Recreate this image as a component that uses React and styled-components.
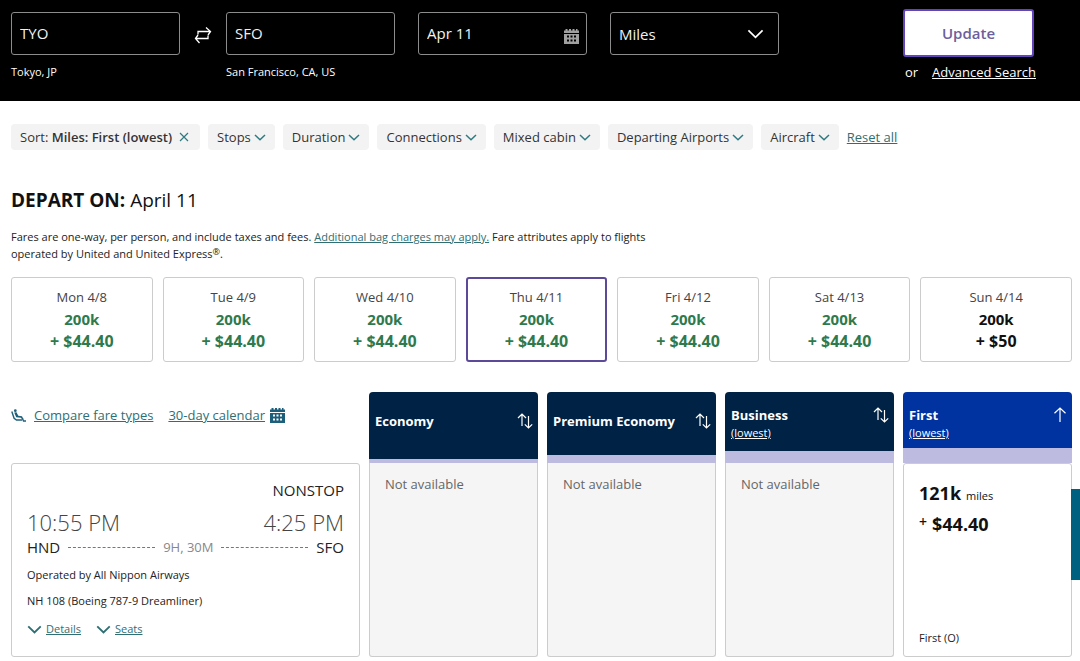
import React from "react";
import styled, { createGlobalStyle } from "styled-components";

const GlobalStyle = createGlobalStyle`
  * {
    box-sizing: border-box;
  }
  body {
    margin: 0;
    background-color: #ffffff;
    color: #222222;
    font-family: "Open Sans", "Noto Sans", sans-serif;
    font-size: 14px;
  }
  button, input, select {
    font-family: inherit;
  }
  a {
    color: #2f6f73;
  }
  svg {
    display: block;
    flex: none;
  }
`;

const SearchBar = styled.form`
  display: flex;
  align-items: flex-start;
  padding: 12px 44px 22px 11px;
  background-color: #000000;
  color: #ffffff;
`;

const Field = styled.div`
  flex: 0 1 169px;
  min-width: 0;
  margin-right: ${(props) => (props.$last ? "0" : "23px")};
`;

const Route = styled.div`
  display: flex;
  flex: 0 1 384px;
  min-width: 0;
  margin-right: 23px;
`;

const RouteField = styled(Field)`
  flex: 1 1 0;
  margin-right: 0;
`;

const Box = styled.div`
  position: relative;
  svg {
    position: absolute;
    right: ${(props) => props.$right || "8px"};
    top: ${(props) => props.$top || "17px"};
    pointer-events: none;
  }
`;

const controlStyle = `
  display: block;
  width: 100%;
  height: 43px;
  padding: 0 8px 2px;
  border: 1px solid #8c8c8c;
  border-radius: 3px;
  background-color: #000000;
  color: #f2f2f2;
  font-size: 15px;
`;

const TextBox = styled.input`
  ${controlStyle}
`;

const DropDown = styled.select`
  ${controlStyle}
  padding-bottom: 0;
  appearance: none;
`;

const Hint = styled.label`
  display: block;
  height: 14px;
  margin-top: 10px;
  font-size: 11px;
  line-height: 14px;
  white-space: nowrap;
`;

const SwapButton = styled.button`
  display: flex;
  align-items: center;
  justify-content: center;
  flex: 0 0 46px;
  height: 46px;
  padding: 0;
  border: 0;
  background: none;
  color: #ffffff;
`;

const Actions = styled.div`
  width: 133px;
  margin: -3px 0 -8px auto;
`;

const UpdateButton = styled.button`
  width: 131px;
  height: 48px;
  border: 2px solid #6244bb;
  border-radius: 3px;
  background-color: #ffffff;
  color: #6c5f9c;
  font-size: 15px;
  font-weight: 600;
`;

const Advanced = styled.div`
  display: flex;
  justify-content: space-between;
  margin-top: 6px;
  padding-left: 2px;
  font-size: 13px;
  line-height: 18px;
  white-space: nowrap;
  a {
    color: #ffffff;
  }
`;

const Content = styled.main`
  padding: 0 8px 0 11px;
`;

const Filters = styled.div`
  display: flex;
  align-items: center;
  gap: 8px;
  margin-top: 23px;
`;

const FilterButton = styled.button`
  display: flex;
  align-items: center;
  gap: ${(props) => (props.$applied ? "7px" : "3px")};
  height: 26px;
  padding: ${(props) => (props.$applied ? "0 11px 0 9px" : "0 9px")};
  border: 0;
  border-radius: 4px;
  background-color: #f3f3f3;
  color: #333333;
  font-size: 13px;
  white-space: nowrap;
  b {
    font-weight: 600;
  }
  svg {
    color: #2f7a80;
  }
`;

const TextLink = styled.a`
  font-size: ${(props) => props.$size || "13px"};
  white-space: nowrap;
`;

const Heading = styled.h1`
  margin: 37px 0 0;
  color: #111111;
  font-size: 19px;
  font-weight: 500;
  line-height: 26px;
  strong {
    font-weight: 700;
  }
`;

const Notice = styled.p`
  max-width: 660px;
  margin: 15px 0 0;
  font-size: 11px;
  line-height: 17px;
  sup {
    font-size: 9px;
    line-height: 0;
    vertical-align: 3px;
  }
`;

const Days = styled.div`
  display: grid;
  grid-template-columns: repeat(6, 14fr) 15fr;
  gap: 10px;
  margin-top: 15px;
`;

const DayButton = styled.button`
  display: flex;
  flex-direction: column;
  align-items: center;
  height: 85px;
  padding: ${(props) => (props.$selected ? "7px" : "8px")} 0 0;
  border: ${(props) => (props.$selected ? "2px solid #5c4a99" : "1px solid #cccccc")};
  border-radius: 3px;
  background-color: #ffffff;
  color: ${(props) => (props.$low ? "#2f7a4d" : "#111111")};
  font-size: 15px;
  font-weight: 700;
  line-height: 22px;
`;

const DayName = styled.span`
  color: #444444;
  font-size: 13px;
  font-weight: 400;
`;

const Fee = styled.span`
  font-size: 16px;
`;

const Results = styled.section`
  display: grid;
  grid-template-columns: minmax(0, 349fr) repeat(4, minmax(0, 169fr));
  column-gap: 9px;
  margin-top: 30px;
  padding-bottom: 4px;
`;

const Tools = styled.div`
  display: flex;
  align-items: center;
  gap: 8px;
  height: 46px;
`;

const CalendarLink = styled.span`
  display: flex;
  align-items: center;
  gap: 5px;
  margin-left: 7px;
`;

const CabinHeader = styled.div`
  display: flex;
  align-items: flex-start;
  justify-content: space-between;
  height: 71px;
  padding: ${(props) => (props.$lowest ? "14px" : "20px")} 5px 0 6px;
  border-bottom: ${(props) => props.$band} solid #bdbbe0;
  border-radius: 4px 4px 0 0;
  background-color: ${(props) => (props.$active ? "#0033a0" : "#002244")};
  color: #ffffff;
`;

const CabinTitle = styled.div`
  font-size: 13px;
  font-weight: 700;
  line-height: 18px;
  white-space: nowrap;
  a {
    display: block;
    color: #ffffff;
    font-size: 11px;
    font-weight: 400;
  }
`;

const SortButton = styled.button`
  padding: 1px 0;
  border: 0;
  background: none;
  color: #ffffff;
`;

const Card = styled.div`
  display: flex;
  flex-direction: column;
  height: 194px;
  padding: 16px 15px;
  border: 1px solid #cccccc;
  border-radius: 3px;
  background-color: #ffffff;
`;

const EmptyCard = styled(Card)`
  padding: 11px 15px;
  border-top: 0;
  border-radius: 0 0 3px 3px;
  background-color: #f5f5f5;
  color: #666666;
  font-size: 13px;
  line-height: 20px;
`;

const Stops = styled.div`
  align-self: flex-end;
  font-size: 15px;
  line-height: 20px;
`;

const Times = styled.div`
  display: flex;
  justify-content: space-between;
  margin-top: 7px;
  color: #444444;
  font-size: 22px;
  font-weight: 300;
  line-height: 30px;
`;

const Leg = styled.div`
  display: flex;
  align-items: center;
  gap: 8px;
  font-size: 15px;
  line-height: 20px;
`;

const Dashes = styled.span`
  flex: 1;
  border-top: 1px dashed #777777;
`;

const Duration = styled.span`
  color: #888888;
  font-size: 13px;
`;

const FlightInfo = styled.div`
  margin-top: 10px;
  font-size: 11px;
  line-height: 16px;
`;

const FlightLinks = styled.div`
  display: flex;
  gap: 15px;
  margin-top: 12px;
  line-height: 16px;
  span {
    display: flex;
    align-items: center;
    gap: 4px;
  }
  svg {
    color: #2f6f73;
  }
`;

const Price = styled.div`
  display: flex;
  align-items: baseline;
  gap: 5px;
  margin-bottom: 5px;
  color: #111111;
  font-size: 18px;
  font-weight: 700;
  line-height: 26px;
  small {
    font-size: 11px;
    font-weight: 400;
    line-height: 16px;
  }
`;

const Plus = styled.span`
  align-self: flex-start;
  font-size: 14px;
  font-weight: 600;
  line-height: 22px;
`;

const FareClass = styled.div`
  margin-top: auto;
  margin-bottom: -6px;
  font-size: 11px;
  line-height: 16px;
`;

const SideTab = styled.div`
  position: fixed;
  top: 489px;
  right: 0;
  width: 9px;
  height: 91px;
  background-color: #006080;
`;

const Chevron = ({ width = 12, height = 7, stroke = 1.5 }) => (
  <svg width={width} height={height} viewBox="0 0 12 7" fill="none">
    <path d="M1 1l5 4.8L11 1" stroke="currentColor" strokeWidth={stroke} />
  </svg>
);

const SwapIcon = () => (
  <svg width="18" height="18" viewBox="0 0 18 18" fill="none">
    <path
      d="M4 8.5V5.5H16.5M12 1.5l4.5 4-2.5 3.5M14 9.500v3H1.500M5.500 17l-4-4.500 2.500-3.500"
      stroke="currentColor"
      strokeWidth="1.3"
    />
  </svg>
);

const CalendarIcon = ({ color, hole }) => (
  <svg width="15" height="15" viewBox="0 0 15 15">
    <path d="M0 1.500h1.500V0h2v1.500H5V0h2v1.500h1.500V0h2v1.500H12V0h1.500v1.500H15V4H0zM0 5h15v10H0z" fill={color} />
    <path
      d="M3 6.500h2v2H3zM6.500 6.500h2v2h-2zM10 6.500h2v2h-2zM3 10.500h2v2H3zM6.500 10.500h2v2h-2zM10 10.500h2v2h-2z"
      fill={hole}
    />
  </svg>
);

const SeatIcon = () => (
  <svg width="15" height="13" viewBox="0 0 15 13">
    <circle cx="4.300" cy="1.700" r="1.400" fill="#1f6079" />
    <path d="M3.200 3.400l2.300-.2 1.800 3.600 3.700.5 1.400 2.700-1.200.4-1.300-1.700-4.700-.4z" fill="#1f6079" />
    <path
      d="M.8 2.500l2.300 6.700 2.400 1.800h5.500M11.500 9.500l1 2.500H15"
      fill="none"
      stroke="#1f6079"
      strokeWidth="1.400"
    />
  </svg>
);

const SortIcon = () => (
  <svg width="16" height="16" viewBox="0 0 16 16" fill="none" stroke="currentColor" strokeWidth="1.2">
    <path d="M5 13V1M1 5l4-4 4 4M11.500 3v12M7.800 11.300l3.700 3.700 3.700-3.700" />
  </svg>
);

const UpIcon = () => (
  <svg width="14" height="16" viewBox="0 0 14 16" fill="none" stroke="currentColor" strokeWidth="1.2">
    <path d="M7 15V1M1.500 6.200L7 1l5.500 5.200" />
  </svg>
);

const CloseIcon = () => (
  <svg width="10" height="10" viewBox="0 0 10 10" fill="none">
    <path d="M1 1l8 8M9 1L1 9" stroke="currentColor" strokeWidth="1.2" />
  </svg>
);

const filters = ["Stops", "Duration", "Connections", "Mixed cabin", "Departing Airports", "Aircraft"];

const days = [
  { name: "Mon 4/8", fee: "$44.40", low: true },
  { name: "Tue 4/9", fee: "$44.40", low: true },
  { name: "Wed 4/10", fee: "$44.40", low: true },
  { name: "Thu 4/11", fee: "$44.40", low: true, selected: true },
  { name: "Fri 4/12", fee: "$44.40", low: true },
  { name: "Sat 4/13", fee: "$44.40", low: true },
  { name: "Sun 4/14", fee: "$50" },
];

const cabins = [
  { name: "Economy", band: "4px" },
  { name: "Premium Economy", band: "8px" },
  { name: "Business", band: "12px", lowest: true },
  { name: "First", band: "15px", lowest: true, active: true },
];

const App = () => {
  return (
    <>
      <GlobalStyle />
      <SearchBar onSubmit={(e) => e.preventDefault()}>
        <Route>
          <RouteField>
            <TextBox id="from" defaultValue="TYO" />
            <Hint htmlFor="from">Tokyo, JP</Hint>
          </RouteField>
          <SwapButton type="button" aria-label="Swap airports">
            <SwapIcon />
          </SwapButton>
          <RouteField>
            <TextBox id="to" defaultValue="SFO" />
            <Hint htmlFor="to">San Francisco, CA, US</Hint>
          </RouteField>
        </Route>
        <Field>
          <Box>
            <TextBox aria-label="Depart date" defaultValue="Apr 11" />
            <CalendarIcon color="#a0a0a0" hole="#000000" />
          </Box>
        </Field>
        <Field $last>
          <Box $right="15px">
            <DropDown aria-label="Show price in" defaultValue="Miles">
              <option>Miles</option>
              <option>Money</option>
            </DropDown>
            <Chevron width={17} height={10} stroke={1.2} />
          </Box>
        </Field>
        <Actions>
          <UpdateButton type="submit">Update</UpdateButton>
          <Advanced>
            or <a href="#advanced">Advanced Search</a>
          </Advanced>
        </Actions>
      </SearchBar>
      <Content>
        <Filters>
          <FilterButton $applied>
            <span>
              Sort: <b>Miles: First (lowest)</b>
            </span>
            <CloseIcon />
          </FilterButton>
          {filters.map((name) => (
            <FilterButton key={name}>
              {name}
              <Chevron />
            </FilterButton>
          ))}
          <TextLink href="#reset">Reset all</TextLink>
        </Filters>
        <Heading>
          <strong>DEPART ON:</strong> April 11
        </Heading>
        <Notice>
          Fares are one-way, per person, and include taxes and fees.{" "}
          <a href="#bags">Additional bag charges may apply.</a> Fare attributes apply to flights
          operated by United and United Express<sup>®</sup>.
        </Notice>
        <Days>
          {days.map((day) => (
            <DayButton key={day.name} $low={day.low} $selected={day.selected}>
              <DayName>{day.name}</DayName>
              <span>200k</span>
              <Fee>+ {day.fee}</Fee>
            </DayButton>
          ))}
        </Days>
        <Results>
          <Tools>
            <SeatIcon />
            <TextLink href="#compare">Compare fare types</TextLink>
            <CalendarLink>
              <TextLink href="#calendar">30-day calendar</TextLink>
              <CalendarIcon color="#1b5f7a" hole="#ffffff" />
            </CalendarLink>
          </Tools>
          {cabins.map((cabin) => (
            <CabinHeader
              key={cabin.name}
              $band={cabin.band}
              $lowest={cabin.lowest}
              $active={cabin.active}
            >
              <CabinTitle>
                {cabin.name}
                {cabin.lowest && <a href="#lowest">(lowest)</a>}
              </CabinTitle>
              <SortButton aria-label={"Sort by " + cabin.name}>
                {cabin.active ? <UpIcon /> : <SortIcon />}
              </SortButton>
            </CabinHeader>
          ))}
          <Card>
            <Stops>NONSTOP</Stops>
            <Times>
              <span>10:55 PM</span>
              <span>4:25 PM</span>
            </Times>
            <Leg>
              HND
              <Dashes />
              <Duration>9H, 30M</Duration>
              <Dashes />
              SFO
            </Leg>
            <FlightInfo>Operated by All Nippon Airways</FlightInfo>
            <FlightInfo>NH 108 (Boeing 787-9 Dreamliner)</FlightInfo>
            <FlightLinks>
              <span>
                <Chevron width={15} height={9} />
                <TextLink $size="11px" href="#details">Details</TextLink>
              </span>
              <span>
                <Chevron width={15} height={9} />
                <TextLink $size="11px" href="#seats">Seats</TextLink>
              </span>
            </FlightLinks>
          </Card>
          <EmptyCard>Not available</EmptyCard>
          <EmptyCard>Not available</EmptyCard>
          <EmptyCard>Not available</EmptyCard>
          <Card>
            <Price>
              121k <small>miles</small>
            </Price>
            <Price>
              <Plus>+</Plus> $44.40
            </Price>
            <FareClass>First (O)</FareClass>
          </Card>
        </Results>
      </Content>
      <SideTab />
    </>
  );
};

export default App;
